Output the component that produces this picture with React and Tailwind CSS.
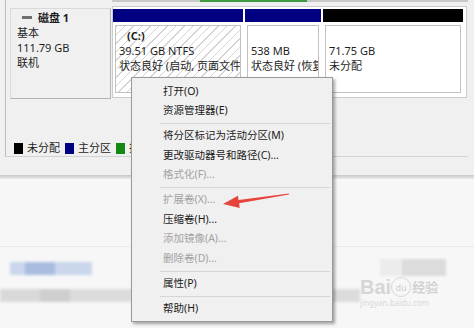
import React from "react";

const items = [
  { label: "打开(O)" },
  { label: "资源管理器(E)" },
  { sep: true },
  { label: "将分区标记为活动分区(M)" },
  { label: "更改驱动器号和路径(C)..." },
  { label: "格式化(F)...", off: true },
  { sep: true },
  { label: "扩展卷(X)...", off: true },
  { label: "压缩卷(H)..." },
  { label: "添加镜像(A)...", off: true },
  { label: "删除卷(D)...", off: true },
  { sep: true },
  { label: "属性(P)" },
  { sep: true },
  { label: "帮助(H)" },
];

function Partition({ bar, width, hatched, title, lines }) {
  return (
    <div className={`flex flex-col ${width}`}>
      <div className={`h-[13px] ${bar}`} />
      <div
        className={`mx-[2px] mt-[3px] h-[68px] overflow-hidden whitespace-nowrap border border-[#c2c2c2] pl-[3px] pt-[2px] leading-[15px] ${
          hatched
            ? "bg-[repeating-linear-gradient(135deg,#d4d4d4_0px,#d4d4d4_1px,#ffffff_1px,#ffffff_6px)]"
            : "bg-white"
        }`}
      >
        <div className="h-[15px] pl-[8px] font-bold">{title}</div>
        {lines.map((l) => (
          <div key={l}>{l}</div>
        ))}
      </div>
    </div>
  );
}

function Legend({ color, label }) {
  return (
    <div className="flex items-center gap-[4px]">
      <span className={`w-[9px] h-[11px] ${color}`} />
      <span>{label}</span>
    </div>
  );
}

export default function App() {
  return (
    <div className="relative w-[474px] h-[328px] overflow-hidden bg-[#f0f0f0] text-[11px] text-[#1e1e1e] font-['Noto_Sans','Noto_Sans_CJK_SC',sans-serif]">
      <div className="ml-[5px] mr-[6px] border-l border-[#bdbdbd]">
        {/* bottom edge of the disk above */}
        <div className="flex h-[6px]">
          <div className="w-[106px]" />
          <div className="flex-1 border-t-[2px] border-[#c9c9c9]">
            <div className="-mt-[2px] ml-[88px] w-[107px] h-[2px] bg-[#3f9b3f]" />
          </div>
        </div>

        {/* disk row */}
        <div className="flex h-[93px] items-start">
          <div className="ml-[4px] mt-[2px] w-[101px] h-[91px] bg-[#f0f0f0] border border-[#dadada] border-r-[#b3b3b3] border-b-[#b3b3b3] pl-[6px] leading-[15px]">
            <div className="flex h-[16px] items-center pt-[1px]">
              <span className="ml-[5px] w-[10px] h-[3px] bg-[#6e6e6e]" />
              <span className="ml-[6px] font-bold">磁盘 1</span>
            </div>
            <div>基本</div>
            <div>111.79 GB</div>
            <div>联机</div>
          </div>

          <div className="ml-[1px] w-[355px] h-[92px] border border-[#cbcbcb] bg-white pt-[2px] flex gap-[2px]">
            <Partition
              bar="bg-[#000080]"
              width="w-[130px]"
              hatched
              title="(C:)"
              lines={["39.51 GB NTFS", "状态良好 (启动, 页面文件"]}
            />
            <Partition
              bar="bg-[#000080]"
              width="w-[76px]"
              title=""
              lines={["538 MB", "状态良好 (恢复分区)"]}
            />
            <Partition
              bar="bg-black"
              width="w-[140px]"
              title=""
              lines={["71.75 GB", "未分配"]}
            />
          </div>
        </div>

        {/* legend */}
        <div className="mt-[42px] flex h-[16px] items-center gap-[5px] border-b border-[#d2d2d2] pl-[8px]">
          <Legend color="bg-black" label="未分配" />
          <Legend color="bg-[#000080]" label="主分区" />
          <Legend color="bg-[#128a12]" label="扩展分区" />
        </div>
      </div>

      <div className="mt-[18px] h-[4px] bg-gradient-to-b from-[#c6c6c6] to-[#ececec]" />

      {/* blurred window below */}
      <div className="h-[150px] bg-[#f7f7f7]">
        <div className="h-[68px] border-b border-[#e9e9e9]" />
        <div className="ml-[10px] mt-[15px] flex h-[13px] w-[82px] blur-[1.5px]">
          <div className="w-[15px] bg-[#c9d6ec]" />
          <div className="w-[30px] bg-[#a9bde0]" />
          <div className="flex-1 bg-[#c9d6ec]" />
        </div>
        <div className="mt-[14px] flex h-[13px] w-[360px] blur-[1.5px]">
          <div className="w-[40px] bg-[#d9d9d9]" />
          <div className="w-[30px] bg-[#cfcfcf]" />
          <div className="flex-1 bg-[#dcdcdc]" />
        </div>
      </div>

      {/* watermark */}
      <div className="absolute left-[360px] top-[259px] flex flex-col items-start">
        <div className="ml-[20px] flex h-[17px] w-[66px] blur-[1px]">
          <div className="w-[22px] bg-[#ececec]" />
          <div className="flex-1 bg-[#dcdcdc]" />
        </div>
        <div className="mt-[1px] flex items-center leading-none">
          <span className="text-[20px] font-bold text-[#d6d6d6] font-['Liberation_Sans',sans-serif]">Bai</span>
          <span className="flex h-[20px] w-[20px] items-center justify-center rounded-full border border-[#d6d6d6] text-[9px] text-[#cfcfcf]">du</span>
          <span className="ml-[1px] text-[13px] font-bold text-[#d2d2d2]">经验</span>
        </div>
        <div className="mt-[2px] text-[8px] leading-none text-[#d8d8d8]">jingyan.baidu.com</div>
      </div>

      {/* context menu */}
      <div className="absolute left-[131px] top-[77px] w-[202px] h-[245px] bg-[#f0f0f0] border border-[#9a9a9a] shadow-[2px_2px_3px_rgba(0,0,0,0.35)] pt-[4px] text-[10.5px]">
        {items.map((it, i) =>
          it.sep ? (
            <div key={i} className="h-[5.5px] ml-[28px] mr-[2px] pt-[2px]">
              <div className="border-t border-[#d5d5d5]" />
            </div>
          ) : (
            <div
              key={i}
              className={`h-[19.5px] flex items-center pl-[31px] ${
                it.off ? "text-[#a2a2a2]" : "text-[#1a1a1a]"
              }`}
            >
              {it.label}
            </div>
          )
        )}
      </div>

      {/* red arrow */}
      <svg
        className="absolute left-[218px] top-[188px]"
        width="76"
        height="26"
        viewBox="218 188 76 26"
      >
        <polygon
          points="223,204 238,195.7 238.5,199.9 289,193.4 289,194.6 239.1,203.3 239.7,208"
          fill="#e6443b"
        />
      </svg>
    </div>
  );
}
